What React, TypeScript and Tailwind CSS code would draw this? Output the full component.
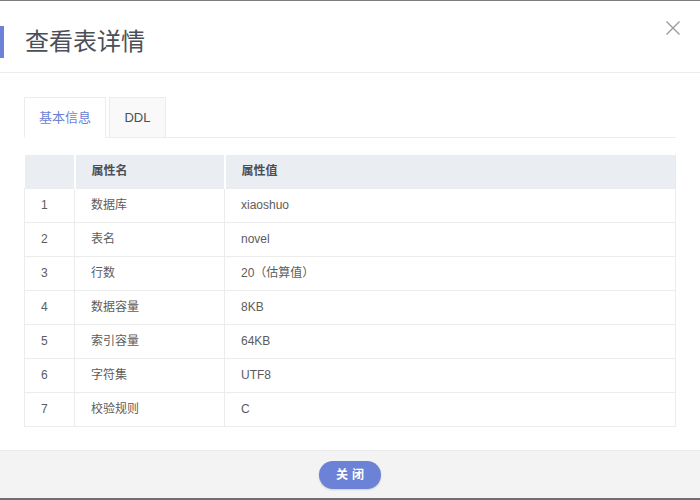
import React from "react";

const rows: [string, string][] = [
  ["数据库", "xiaoshuo"],
  ["表名", "novel"],
  ["行数", "20（估算值）"],
  ["数据容量", "8KB"],
  ["索引容量", "64KB"],
  ["字符集", "UTF8"],
  ["校验规则", "C"],
];

export default function App() {
  return (
    <div
      className="w-[700px] h-[500px] bg-white flex flex-col border-t border-t-[#7d7d7d] border-b-2 border-b-[#6f6f6f] overflow-hidden"
      style={{ fontFamily: '"Liberation Sans", "Noto Sans CJK SC", sans-serif' }}
    >
      {/* Header */}
      <div className="relative h-[72px] shrink-0 border-b border-[#ececec] flex items-start pt-[25px]">
        <div className="w-[4px] h-[32px] bg-[#6b82d6]" />
        <div className="ml-[21px] text-[24px] leading-[32px] text-[#4a4f58]">查看表详情</div>
        <button className="absolute right-[19px] top-[19px] w-[16px] h-[16px] flex items-center justify-center">
          <svg width="16" height="16" viewBox="0 0 16 16">
            <path d="M1.5 1.5 L14.5 14.5 M14.5 1.5 L1.5 14.5" stroke="#9a9a9a" strokeWidth="1.4" fill="none" />
          </svg>
        </button>
      </div>

      {/* Body */}
      <div className="flex-1 px-[24px] pt-[24px]">
        <div className="flex items-end gap-[3px] border-b border-[#ececec] h-[41px]">
          <div className="h-[41px] w-[82px] flex items-center justify-center border border-[#ececec] border-b-white bg-white text-[13px] text-[#6b82d6] -mb-px">
            基本信息
          </div>
          <div className="h-[40px] w-[57px] flex items-center justify-center border border-[#ececec] border-b-0 bg-[#f9f9f9] text-[13px] text-[#4a4f58]">
            DDL
          </div>
        </div>

        <table className="mt-[17px] w-[652px] border-collapse text-[12px] table-fixed">
          <colgroup>
            <col className="w-[50px]" />
            <col className="w-[150px]" />
            <col />
          </colgroup>
          <thead>
            <tr className="h-[33px] bg-[#eaedf2]">
              <th className="border-r-2 border-white"></th>
              <th className="border-r-2 border-white text-left pl-[16px] font-bold text-[#4a4f58]">属性名</th>
              <th className="text-left pl-[16px] font-bold text-[#4a4f58] border-r border-r-[#e8e8e8]">属性值</th>
            </tr>
          </thead>
          <tbody>
            {rows.map(([k, v], i) => (
              <tr key={k} className="h-[34px]">
                <td className="border border-[#ececec] pl-[16px] text-[#5c5c5c]">{i + 1}</td>
                <td className="border border-[#ececec] pl-[16px] text-[#5c5c5c]">{k}</td>
                <td className="border border-[#ececec] pl-[16px] text-[#5c5c5c]">{v}</td>
              </tr>
            ))}
          </tbody>
        </table>
      </div>

      {/* Footer */}
      <div className="h-[48px] shrink-0 bg-[#f3f3f3] border-t border-[#ebebeb] flex items-center justify-center">
        <button className="w-[62px] h-[28px] rounded-full bg-[#6b82d6] text-white text-[12px] font-bold tracking-[4px] pl-[4px] shadow-[0_1px_2px_rgba(0,0,0,0.15)]">
          关闭
        </button>
      </div>
    </div>
  );
}
